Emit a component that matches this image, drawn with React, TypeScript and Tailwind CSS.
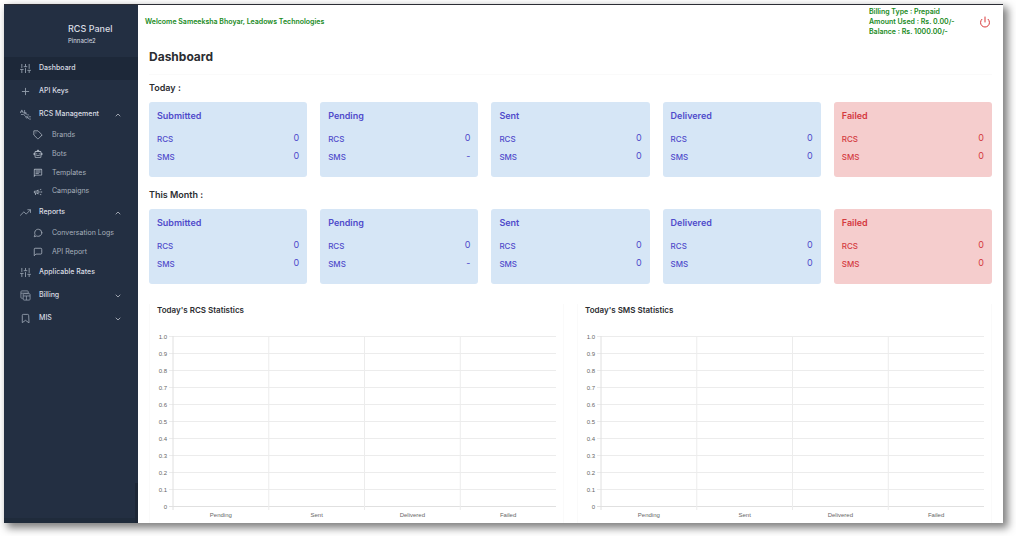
import { useState } from "react";
import type { ReactNode } from "react";
import { FiSliders, FiPlus, FiTrendingUp, FiBookmark, FiTag, FiMessageCircle, FiMessageSquare, FiChevronUp, FiChevronDown, FiPower } from "react-icons/fi";
import { MdOutlineChat, MdOutlineCampaign, MdOutlineSmartToy } from "react-icons/md";

interface NavItem {
  label: string;
  icon: ReactNode;
  expandable?: boolean;
  listClass?: string;
  children?: { label: string; icon: ReactNode }[];
}

interface Stat {
  title: string;
  rcs: string;
  sms: string;
  failed?: boolean;
}

function NodesIcon() {
  return (
    <svg viewBox="0 0 24 24" className="size-[11px]" fill="none" stroke="currentColor" strokeWidth="1.8" strokeLinecap="round" strokeLinejoin="round" aria-hidden="true">
      <path d="M1 8l3-6 3 6M2 6h4M10 3v5M3 12h5l5 5" />
      <circle cx="11" cy="9" r="2" />
      <circle cx="15" cy="18" r="2" />
      <path d="M13 10l3 3h3M17 19l3 3h3M20 17h3" />
    </svg>
  );
}

function BillingIcon() {
  return (
    <svg viewBox="0 0 24 24" className="size-[11px]" fill="none" stroke="currentColor" strokeWidth="1.8" strokeLinejoin="round" aria-hidden="true">
      <path d="M6 18H4a2 2 0 0 1-2-2V4a2 2 0 0 1 2-2h12a2 2 0 0 1 2 2v3M2 7h16" />
      <rect x="7" y="8" width="15" height="14" rx="2" />
      <path d="M7 13h15M14 13v9" />
    </svg>
  );
}

const navItems: NavItem[] = [
  { label: "Dashboard", icon: <FiSliders /> },
  { label: "API Keys", icon: <FiPlus /> },
  {
    label: "RCS Management",
    icon: <NodesIcon />,
    expandable: true,
    listClass: "h-[75px]",
    children: [
      { label: "Brands", icon: <FiTag /> },
      { label: "Bots", icon: <MdOutlineSmartToy /> },
      { label: "Templates", icon: <MdOutlineChat /> },
      { label: "Campaigns", icon: <MdOutlineCampaign /> },
    ],
  },
  {
    label: "Reports",
    icon: <FiTrendingUp />,
    expandable: true,
    listClass: "h-[37px]",
    children: [
      { label: "Conversation Logs", icon: <FiMessageCircle /> },
      { label: "API Report", icon: <FiMessageSquare /> },
    ],
  },
  { label: "Applicable Rates", icon: <FiSliders /> },
  { label: "Billing", icon: <BillingIcon />, expandable: true },
  { label: "MIS", icon: <FiBookmark />, expandable: true },
];

const stats: Stat[] = [
  { title: "Submitted", rcs: "0", sms: "0" },
  { title: "Pending", rcs: "0", sms: "-" },
  { title: "Sent", rcs: "0", sms: "0" },
  { title: "Delivered", rcs: "0", sms: "0" },
  { title: "Failed", rcs: "0", sms: "0", failed: true },
];

const ticks = ["1.0", "0.9", "0.8", "0.7", "0.6", "0.5", "0.4", "0.3", "0.2", "0.1", "0"];
const categories = ["Pending", "Sent", "Delivered", "Failed"];

function Sidebar() {
  const [open, setOpen] = useState<Record<string, boolean>>({ "RCS Management": true, Reports: true });

  return (
    <aside className="relative flex w-[134px] shrink-0 flex-col bg-[#232f42] text-[#d9dde3]">
      <div className="h-[52px] pl-16 pt-[18px]">
        <p className="text-[9px] leading-3 font-medium">RCS Panel</p>
        <p className="text-[6px] leading-3">Pinnacle2</p>
      </div>
      <nav className="flex-1">
        {navItems.map((item) => (
          <div key={item.label}>
            <button
              type="button"
              onClick={() => item.expandable && setOpen({ ...open, [item.label]: !open[item.label] })}
              className={`flex h-[23px] w-full items-center pl-4 pr-4 text-left text-[7px] font-medium ${item.label === "Dashboard" ? "bg-[#1d2839]" : ""}`}
            >
              <span className="flex w-[19px] text-[11px] text-[#929cab]">{item.icon}</span>
              <span className="flex-1">{item.label}</span>
              {item.expandable && (
                <span className="flex text-[8px]">{open[item.label] ? <FiChevronUp /> : <FiChevronDown />}</span>
              )}
            </button>
            {item.children && open[item.label] && (
              <ul className={`flex flex-col ${item.listClass}`}>
                {item.children.map((child) => (
                  <li key={child.label} className="flex flex-1">
                    <a href="#" className="flex items-center pl-[29px] text-[7px] text-[#a7b0bc]">
                      <span className="flex w-[19px] text-[10px]">{child.icon}</span>
                      {child.label}
                    </a>
                  </li>
                ))}
              </ul>
            )}
          </div>
        ))}
      </nav>
      <div className="h-[5px] bg-[#1f2b3b]" />
      {/* scroll thumb */}
      <div className="absolute right-0 bottom-0 h-10 w-[3px] bg-[#1d2736]" />
    </aside>
  );
}

function StatCard({ title, rcs, sms, failed }: Stat) {
  return (
    <div className={`h-[75px] rounded-[3px] px-2 pt-2 ${failed ? "bg-[#f5cdcd] text-[#d43a3f]" : "bg-[#d6e6f6] text-[#504bcb]"}`}>
      <h3 className="text-[9px] leading-3 font-semibold">{title}</h3>
      <dl className="mt-[7px] text-[9px]">
        <div className="flex h-[18px] items-center justify-between">
          <dt className="pt-px text-[8px] font-medium">RCS</dt>
          <dd>{rcs}</dd>
        </div>
        <div className="flex h-[18px] items-center justify-between">
          <dt className="pt-px text-[8px] font-medium">SMS</dt>
          <dd>{sms}</dd>
        </div>
      </dl>
    </div>
  );
}

function StatRow({ heading }: { heading: string }) {
  return (
    <section>
      <h2 className="pb-2 text-[9px] leading-3 font-semibold">{heading}</h2>
      <div className="grid grid-cols-5 gap-[13px]">
        {stats.map((s) => (
          <StatCard key={s.title} {...s} />
        ))}
      </div>
    </section>
  );
}

function StatChart({ title }: { title: string }) {
  return (
    <section className="border-x border-[#fafafa] px-[7px]">
      <h2 className="text-[8px] leading-3 font-semibold">{title}</h2>
      <svg className="mt-5 ml-4 h-[187px] w-[calc(100%-16px)] overflow-visible font-['Liberation_Sans',sans-serif]" role="img" aria-label={title}>
        {ticks.map((t, i) => (
          <g key={t}>
            <line x1="-4" x2="100%" y1={i * 17 + 0.5} y2={i * 17 + 0.5} stroke={t === "0" ? "#e0e0e0" : "#ececec"} />
            <text x="-6" y={i * 17 + 3} textAnchor="end" fontSize="6" fill="#666">{t}</text>
          </g>
        ))}
        {categories.map((c, i) => (
          <g key={c}>
            <line x1={`${i * 25}%`} x2={`${i * 25}%`} y1="0" y2="174" stroke={i === 0 ? "#e0e0e0" : "#ececec"} />
            <text x={`${i * 25 + 12.5}%`} y="181" textAnchor="middle" fontSize="6" fill="#666">{c}</text>
          </g>
        ))}
      </svg>
    </section>
  );
}

export default function App() {
  return (
    <div className="min-h-screen bg-white pt-1 pr-[13px] pb-[13px] pl-1 font-[Inter,sans-serif] text-[#2b2d31]">
      <div className="flex border-t border-[#2c2d35] bg-white shadow-[4px_4px_8px_1px_rgba(0,0,0,0.5)]">
        <Sidebar />
        <main className="min-w-0 flex-1 px-[11px]">
          <header className="-ml-1 flex h-[34px] items-center pr-px text-[7px] font-semibold text-[#188a1c]">
            <p className="flex-1">Welcome Sameeksha Bhoyar, Leadows Technologies</p>
            <div className="w-[110px] leading-[10px]">
              <p>Billing Type : Prepaid</p>
              <p>Amount Used : Rs. 0.00/-</p>
              <p>Balance : Rs. 1000.00/-</p>
            </div>
            <button type="button" aria-label="Log out" className="text-[12px] text-[#d9383a]">
              <FiPower />
            </button>
          </header>
          <h1 className="border-b border-[#fafafa] pt-[10px] pb-[9px] text-[12px] leading-4 font-bold">Dashboard</h1>
          <div className="flex flex-col gap-3 pt-[7px]">
            <StatRow heading="Today :" />
            <StatRow heading="This Month :" />
          </div>
          <div className="mt-5 grid grid-cols-2 gap-[13px]">
            <StatChart title="Today's RCS Statistics" />
            <StatChart title="Today's SMS Statistics" />
          </div>
        </main>
      </div>
    </div>
  );
}
